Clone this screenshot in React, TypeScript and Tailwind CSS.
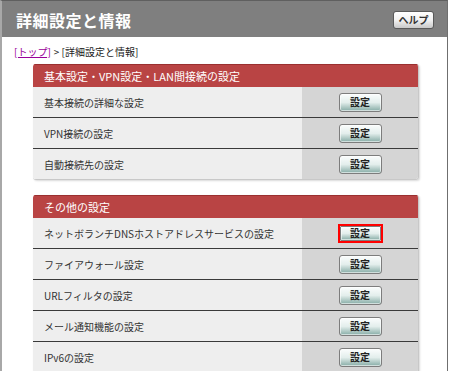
import React from 'react';

const font = { fontFamily: '"MS PGothic", "Noto Sans CJK JP", sans-serif' };

interface Row {
  label: string;
  highlight?: boolean;
}

const SettingButton: React.FC<{ highlight?: boolean }> = ({ highlight }) => (
  <div
    className={
      highlight
        ? 'flex h-[19px] w-[45px] items-center justify-center border-2 border-[#ff0000] bg-white'
        : 'flex h-[19px] w-[45px] items-center justify-center'
    }
  >
    <button
      type="button"
      className={
        (highlight ? 'h-[15px] w-[41px] rounded-[1px]' : 'h-[19px] w-[43px] rounded-[3px]') +
        ' flex items-center justify-center border border-[#7d7d7d] bg-gradient-to-b from-[#fbfdfd] via-[#e3eeec] to-[#86aca6] text-[10px] font-bold leading-none text-[#222] shadow-[inset_0_0_0_1px_rgba(255,255,255,0.6)]'
      }
    >
      設定
    </button>
  </div>
);

const Section: React.FC<{ title: string; rows: Row[]; className?: string }> = ({ title, rows, className }) => (
  <section
    className={
      'ml-[31px] w-[386px] overflow-hidden rounded-[3px] border-b border-r border-[#c8c8c8] shadow-[1px_1px_2px_rgba(0,0,0,0.15)] ' +
      (className ?? '')
    }
  >
    <div className="flex h-[23px] items-center border-t border-[#9a3030] bg-[#b94444] pl-[11px] text-[11px] text-white">
      {title}
    </div>
    {rows.map((row, i) => (
      <div
        key={row.label}
        className={i > 0 ? 'flex h-[31px] border-t border-[#3a3a3a]' : 'flex h-[30px]'}
      >
        <div className="flex flex-1 items-center bg-[#eeeeee] pl-[11px] text-[10px] text-[#333]">{row.label}</div>
        <div className="flex w-[116px] items-center justify-center bg-[#d5d5d5]">
          <SettingButton highlight={row.highlight} />
        </div>
      </div>
    ))}
  </section>
);

export default function App() {
  return (
    <div
      className="h-[371px] w-[448px] overflow-hidden border-l-2 border-r border-t border-l-[#a8a8a8] border-r-[#6f6f6f] border-t-[#5f5f5f] bg-white"
      style={font}
    >
      <header className="flex h-[36px] items-center justify-between bg-[#7f7f7f] pl-[14px] pr-[13px] pt-[2px]">
        <h1 className="text-[16px] font-bold tracking-[0.5px] text-white">詳細設定と情報</h1>
        <button
          type="button"
          className="flex h-[18px] w-[41px] items-center justify-center rounded-[3px] border border-[#5a5a5a] bg-gradient-to-b from-white via-[#f2f2f2] to-[#c9c9c9] text-[10px] font-bold leading-none text-[#333]"
        >
          ヘルプ
        </button>
      </header>
      <div className="mt-[9px] flex h-[12px] items-center pl-[12px] text-[10px] leading-none text-[#222]">
        <a href="#" className="text-[#990099] underline">
          [トップ]
        </a>
        <span className="ml-[3px]">&gt; [詳細設定と情報]</span>
      </div>
      <Section
        className="mt-[6px]"
        title="基本設定・VPN設定・LAN間接続の設定"
        rows={[{ label: '基本接続の詳細な設定' }, { label: 'VPN接続の設定' }, { label: '自動接続先の設定' }]}
      />
      <Section
        className="mt-[15px]"
        title="その他の設定"
        rows={[
          { label: 'ネットボランチDNSホストアドレスサービスの設定', highlight: true },
          { label: 'ファイアウォール設定' },
          { label: 'URLフィルタの設定' },
          { label: 'メール通知機能の設定' },
          { label: 'IPv6の設定' },
        ]}
      />
    </div>
  );
}
